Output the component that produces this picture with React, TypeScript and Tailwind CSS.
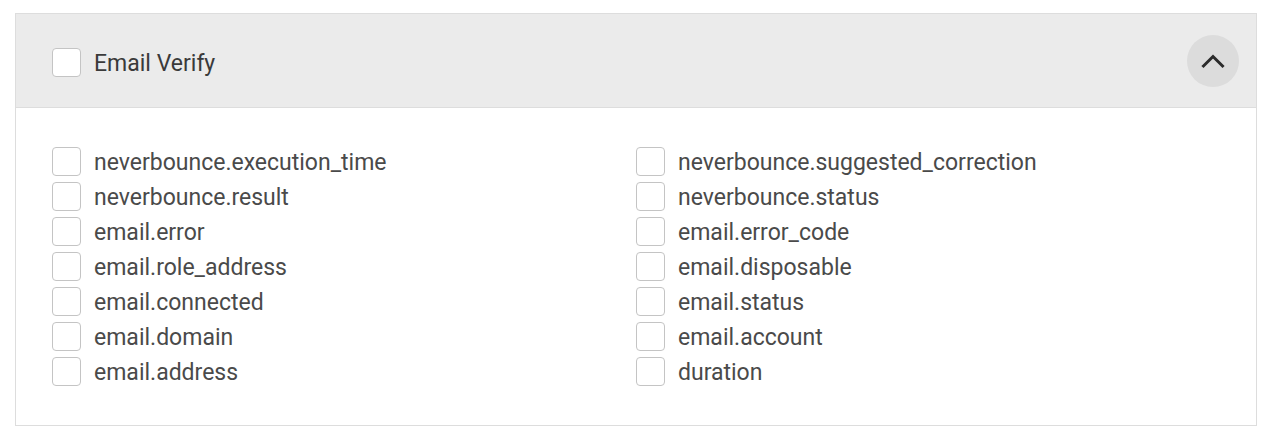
const FIELDS = [
  'neverbounce.execution_time',
  'neverbounce.suggested_correction',
  'neverbounce.result',
  'neverbounce.status',
  'email.error',
  'email.error_code',
  'email.role_address',
  'email.disposable',
  'email.connected',
  'email.status',
  'email.domain',
  'email.account',
  'email.address',
  'duration',
]

function Box() {
  return (
    <span className="w-[29px] h-[29px] shrink-0 rounded-[4px] border border-[#c4c4c4] bg-white" />
  )
}

export default function App() {
  return (
    <div
      className="min-h-screen bg-white px-[15px] pt-[13px]"
      style={{ fontFamily: 'Roboto, "Noto Sans", sans-serif' }}
    >
      <div className="border border-[#dddddd]">
        {/* Header */}
        <div className="flex items-center justify-between h-[94px] bg-[#ebebeb] border-b border-[#dddddd] pl-[36px] pr-[17px]">
          <label className="flex items-center gap-[13px] pt-[4px]">
            <Box />
            <span className="text-[23px] leading-none pt-[1px] text-[#3a3a3a]">Email Verify</span>
          </label>
          <button className="w-[52px] h-[52px] rounded-full bg-[#dcdcdc] flex items-center justify-center">
            <svg width="52" height="52" viewBox="0 0 52 52" fill="none">
              <polyline
                points="16.5,31 26,21.5 35.5,31"
                stroke="#2b2b2b"
                strokeWidth="3"
                strokeLinecap="square"
              />
            </svg>
          </button>
        </div>

        {/* Fields */}
        <div className="grid grid-cols-2 px-[36px] py-[36px]">
          {FIELDS.map((f) => (
            <label key={f} className="flex items-center gap-[13px] h-[35px]">
              <Box />
              <span className="text-[23px] leading-none pt-[2px] text-[#4a4a4a]">{f}</span>
            </label>
          ))}
        </div>
      </div>
    </div>
  )
}
